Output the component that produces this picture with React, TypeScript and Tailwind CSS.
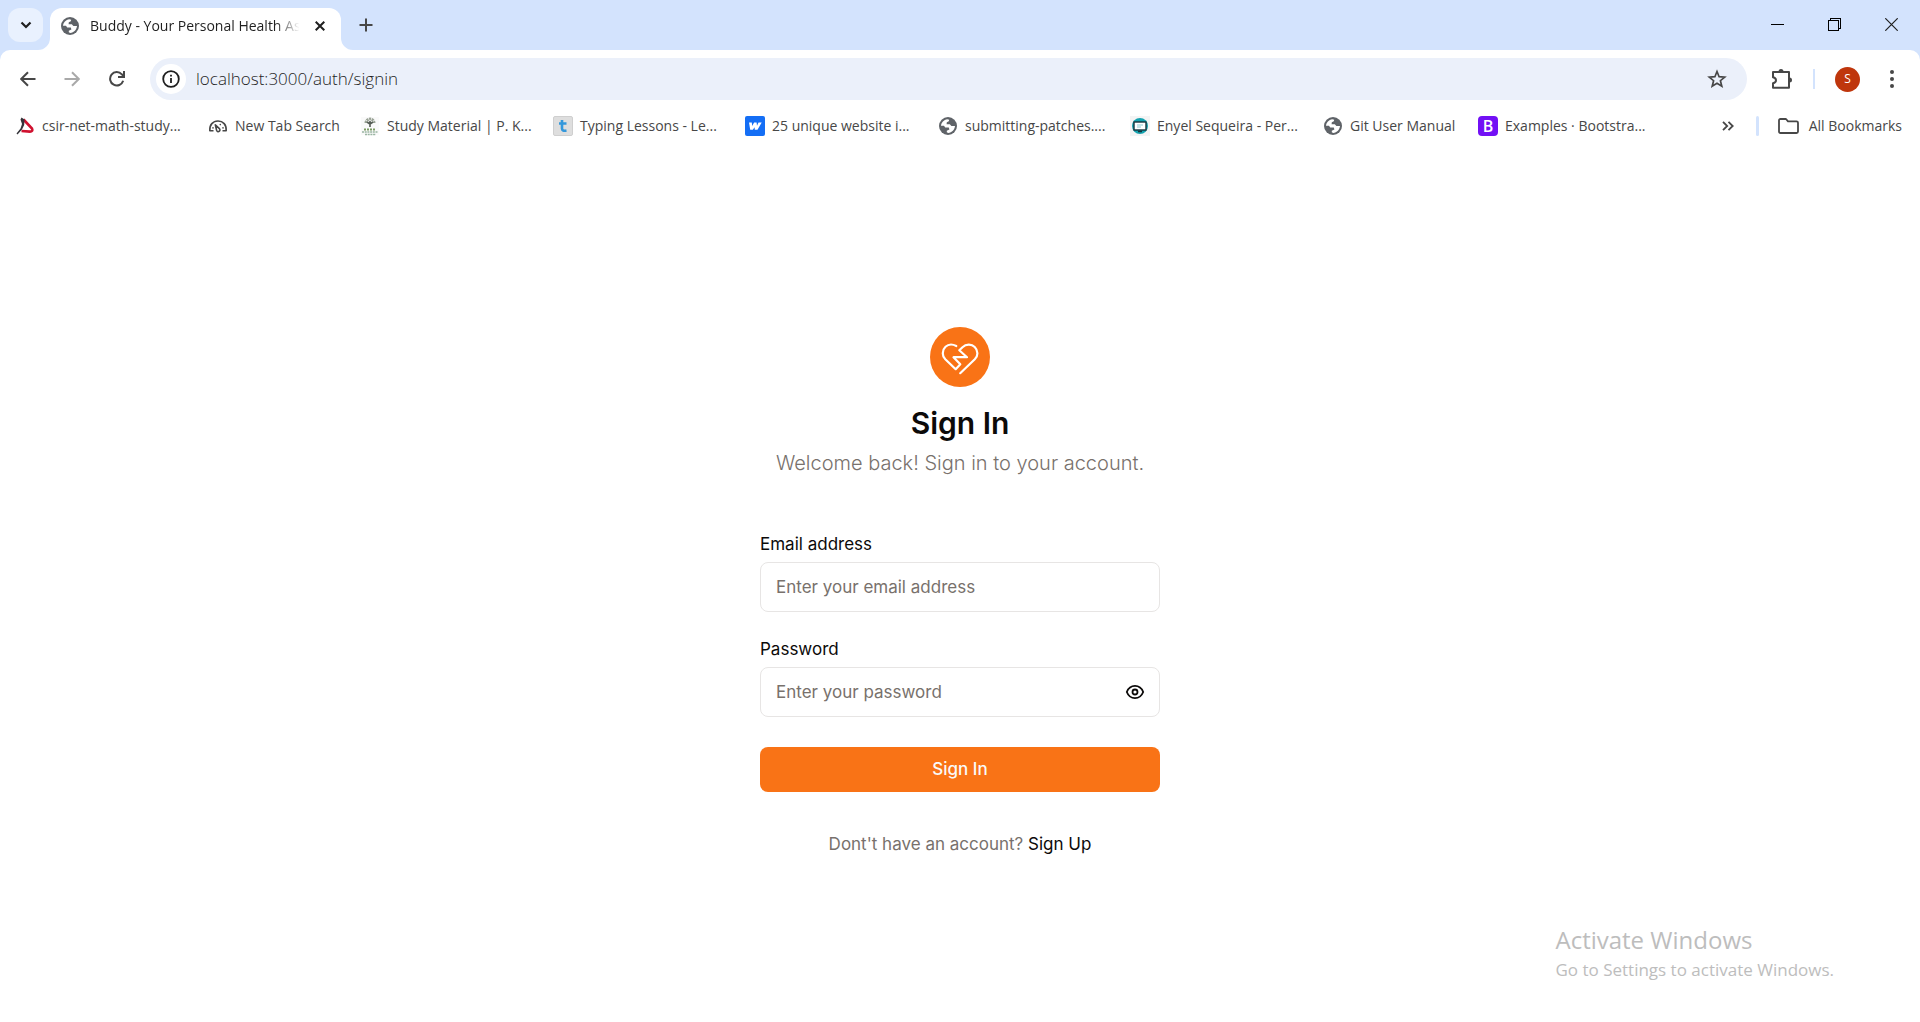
import React from "react";

const Globe = () => (
  <svg viewBox="0 0 18 18" className="size-[18px]" aria-hidden="true">
    <circle cx="9" cy="9" r="9" fill="#5f6368" />
    <path
      d="M2 8.800C2.200 5.500 5 2.600 8.200 2.200L10.200 2.800 9.800 4.200 7.800 5.200 7.600 7.200H10.800L12.400 9H16C15.700 12.600 13 15.600 9.200 15.900L7.800 15.300V13.800L10.400 12.600 9.800 10.600H6.200L5 8.800Z"
      fill="#fff"
    />
  </svg>
);

const MathIcon = () => (
  <svg viewBox="0 0 20 20" className="size-5" aria-hidden="true">
    <path d="M8.500 3.500L17 12.500C18 14.500 17 15.600 15 15.600L6.500 15" stroke="#d0112f" strokeWidth="2.600" fill="none" />
    <path d="M6.500 1.500L9.500 3.500 9.200 9 7 13.500 2.500 18.500 1.500 17.500 5.500 12.500 7 8 5.500 3.500Z" fill="#35343a" />
  </svg>
);

const GaugeIcon = () => (
  <svg viewBox="0 0 20 20" className="size-5" fill="none" stroke="#474747" strokeWidth="1.600" strokeLinejoin="round" aria-hidden="true">
    <path d="M5.500 14.800H1.800C1.300 8.800 5 5 10 5S18.700 8.800 18.200 14.800H14.500" />
    <path d="M7.300 8.800L8.600 14.400a1.700 1.700 0 1 0 2.800-1.700z" />
    <path d="M5 11.800v.1M15 11.800v.1M12.300 8.500v.1" strokeLinecap="round" />
  </svg>
);

const TreeIcon = () => (
  <svg viewBox="0 0 20 20" className="size-5" aria-hidden="true">
    <rect x="1" y="1" width="18" height="18" fill="#fafafa" />
    <path d="M6 7a4 4 0 0 1 8 0" stroke="#9aa396" strokeWidth="3" fill="none" strokeDasharray="2 .6" />
    <path d="M10 5v6M10 8l-3-2M10 8l3-2" stroke="#555d55" strokeWidth="1.600" />
    <path d="M4 13.500h12" stroke="#7a9a62" strokeWidth="2" strokeDasharray="2 1" />
    <path d="M2 16h16M5 18.500h11" stroke="#9ab5a2" strokeWidth="1.300" strokeDasharray="2 .7" />
  </svg>
);

const TypingIcon = () => (
  <span className="flex size-5 items-center justify-center rounded-xs border border-[#cfcfcf] bg-[#dedede]">
    <svg viewBox="0 0 10 14" className="h-3.5 w-2.5" fill="none" stroke="#3498db" strokeWidth="2.600" aria-hidden="true">
      <path d="M4 1v8.500c0 2 1.500 2.600 4.500 2M1 4.500h7.500" />
    </svg>
  </span>
);

const WebflowIcon = () => (
  <svg viewBox="0 0 20 20" className="size-5" aria-hidden="true">
    <rect width="20" height="20" rx="2" fill="#146ef5" />
    <path d="M4 6.500h2.800l.4 3.400 1.900-3.400h2.500l.4 3.200 1.500-3.200h3.200l-4.200 7.300H9.800l-.2-2.500-1.800 2.500H5.200z" fill="#fff" />
  </svg>
);

const ScreenIcon = () => (
  <svg viewBox="0 0 20 20" className="size-5" aria-hidden="true">
    <rect width="20" height="20" fill="#f4f4f4" />
    <circle cx="10" cy="10" r="8" fill="#14a3b0" />
    <rect x="4" y="6" width="12" height="8" fill="#fff" stroke="#17323b" strokeWidth="1.400" />
    <path d="M7 9h6M7 11h4" stroke="#8ccbd3" />
    <path d="M8 15.500h4" stroke="#17323b" strokeWidth="1.500" />
  </svg>
);

const BootstrapIcon = () => (
  <span className="flex size-5 items-center justify-center rounded-sm bg-[#7210f5] text-base leading-5 font-semibold text-white">
    B
  </span>
);

const bookmarks = [
  { label: "csir-net-math-study...", icon: <MathIcon />, width: "w-[193px]" },
  { label: "New Tab Search", icon: <GaugeIcon />, width: "w-[152px]" },
  { label: "Study Material | P. K...", icon: <TreeIcon />, width: "w-[193px]" },
  { label: "Typing Lessons - Le...", icon: <TypingIcon />, width: "w-[192px]" },
  { label: "25 unique website i...", icon: <WebflowIcon />, width: "w-[193px]" },
  { label: "submitting-patches....", icon: <Globe />, width: "w-[192px]" },
  { label: "Enyel Sequeira - Per...", icon: <ScreenIcon />, width: "w-[193px]" },
  { label: "Git User Manual", icon: <Globe />, width: "w-[155px]" },
  { label: "Examples · Bootstra...", icon: <BootstrapIcon />, width: "w-[193px]" },
];

function TabStrip() {
  return (
    <div className="flex h-[50px] items-start bg-[#d3e3fd] pl-2">
      <button aria-label="Search tabs" className="mt-2 flex h-[34px] w-[35px] items-center justify-center rounded-xl bg-[#e9f1fe]">
        <svg viewBox="0 0 12 8" className="h-2 w-3" fill="none" stroke="#1f1f1f" strokeWidth="2.200" aria-hidden="true">
          <path d="M1.500 1.500L6 6l4.500-4.500" />
        </svg>
      </button>
      <div className="relative mt-2 ml-[7px] flex h-[42px] w-[291px] items-center rounded-t-xl bg-white pb-1.5 pl-[11px]">
        <svg viewBox="0 0 12 12" className="absolute bottom-0 -left-3 size-3" aria-hidden="true">
          <path d="M12 0v12H0A12 12 0 0 0 12 0z" fill="#fff" />
        </svg>
        <svg viewBox="0 0 12 12" className="absolute -right-3 bottom-0 size-3" aria-hidden="true">
          <path d="M0 0v12h12A12 12 0 0 1 0 0z" fill="#fff" />
        </svg>
        <Globe />
        <span className="ml-[11px] w-[216px] mask-r-from-86% mask-r-to-97% text-sm whitespace-nowrap text-[#1f1f1f]">
          Buddy - Your Personal Health As
        </span>
        <button aria-label="Close tab" className="ml-1 flex size-5 items-center justify-center">
          <svg viewBox="0 0 10 10" className="size-2.5" stroke="#1f1f1f" strokeWidth="2" aria-hidden="true">
            <path d="M.7.7l8.600 8.600M9.300.7L.7 9.300" />
          </svg>
        </button>
      </div>
      <button aria-label="New tab" className="mt-[15px] ml-[15px] flex size-5 items-center justify-center">
        <svg viewBox="0 0 14 14" className="size-3.5" stroke="#474747" strokeWidth="2" aria-hidden="true">
          <path d="M7 .5v13M.5 7h13" />
        </svg>
      </button>
      <div className="ml-auto flex">
        <button aria-label="Minimize" className="flex h-[49px] w-[57px] items-center justify-center">
          <span className="h-px w-[13px] bg-black" />
        </button>
        <button aria-label="Restore" className="flex h-[49px] w-[57px] items-center justify-center">
          <svg viewBox="0 0 13 13" className="size-[13px]" fill="none" stroke="#000" shapeRendering="crispEdges" aria-hidden="true">
            <path d="M.5 2.500h10v10H.5zM2.500 2.500v-2h10v10h-2" />
          </svg>
        </button>
        <button aria-label="Close window" className="flex h-[49px] w-[57px] items-center justify-center">
          <svg viewBox="0 0 13 13" className="size-[13px]" stroke="#1f1f1f" strokeWidth="1.200" aria-hidden="true">
            <path d="M.3.3l12.400 12.400M12.700.3L.3 12.700" />
          </svg>
        </button>
      </div>
    </div>
  );
}

function Toolbar() {
  return (
    <div className="bg-[#d3e3fd]">
      <div className="flex items-center rounded-t-[10px] bg-white px-[18px] pt-2">
        <button aria-label="Back" className="flex size-5 items-center justify-center">
          <svg viewBox="0 0 16 16" className="size-4" fill="none" stroke="#474747" strokeWidth="2" aria-hidden="true">
            <path d="M15.500 8H1.500M8 1.200L1.200 8 8 14.800" />
          </svg>
        </button>
        <button aria-label="Forward" disabled className="ml-6 flex size-5 items-center justify-center">
          <svg viewBox="0 0 16 16" className="size-4" fill="none" stroke="#a9a9a9" strokeWidth="2" aria-hidden="true">
            <path d="M.5 8h14M8 1.200L14.800 8 8 14.800" />
          </svg>
        </button>
        <button aria-label="Reload" className="ml-[25px] flex size-5 items-center justify-center">
          <svg viewBox="0 0 16 16" className="size-4" fill="none" stroke="#474747" strokeWidth="2" aria-hidden="true">
            <path d="M14.200 9.800A6.700 6.700 0 1 1 12.800 3.300L14.500 5" />
            <path d="M15 0v6H9" />
          </svg>
        </button>
        <div className="ml-[23px] flex h-[42px] flex-1 items-center rounded-full bg-[#ebf0fa] pr-5 pl-1.5">
          <button aria-label="View site information" className="flex size-[30px] items-center justify-center rounded-full bg-white">
            <svg viewBox="0 0 18 18" className="size-[18px]" fill="none" stroke="#1f1f1f" strokeWidth="1.800" aria-hidden="true">
              <circle cx="9" cy="9" r="7.800" />
              <path d="M9 8v5M9 4.800v1.800" />
            </svg>
          </button>
          <input
            aria-label="Address"
            defaultValue="localhost:3000/auth/signin"
            className="ml-2.5 min-w-0 flex-1 bg-transparent text-[17px] leading-6 font-light text-[#1f1f1f] outline-none"
          />
          <button aria-label="Bookmark this tab" className="flex size-5 items-center justify-center">
            <svg viewBox="0 0 20 20" className="size-5" fill="none" stroke="#474747" strokeWidth="1.700" aria-hidden="true">
              <path d="M10 2.500l2.100 5.200 5.600.4-4.300 3.600 1.400 5.500-4.800-3-4.800 3 1.400-5.500L2.300 8.100l5.600-.4z" />
            </svg>
          </button>
        </div>
        <button aria-label="Extensions" className="ml-6 flex size-[21px] items-center justify-center">
          <svg viewBox="0 0 21 21" className="size-[21px]" aria-hidden="true">
            <path
              d="M2 3h16v15.800H2v-4.500c1.900-.4 3-1.400 3-3s-1.100-2.600-3-3z"
              fill="none" stroke="#474747" strokeWidth="2" strokeLinejoin="round"
            />
            <path d="M7.500 2.500a2.500 2.500 0 0 1 5 0zM18.500 8.500a2.500 2.500 0 0 1 0 5z" fill="#474747" />
          </svg>
        </button>
        <span className="ml-[21px] h-5 w-0.5 bg-[#d3e3fd]" />
        <button aria-label="Profile" className="ml-5 flex size-[25px] items-center justify-center rounded-full bg-[#bf360c] text-xs text-white">
          S
        </button>
        <button aria-label="Menu" className="ml-[22px] flex size-5 items-center justify-center">
          <svg viewBox="0 0 4 18" className="h-[18px] w-1" fill="#474747" aria-hidden="true">
            <circle cx="2" cy="2" r="2" />
            <circle cx="2" cy="9" r="2" />
            <circle cx="2" cy="16" r="2" />
          </svg>
        </button>
      </div>
    </div>
  );
}

function BookmarksBar() {
  return (
    <nav aria-label="Bookmarks" className="flex h-[52px] items-center pr-[18px] pl-[15px] text-sm whitespace-nowrap text-[#474747]">
      {bookmarks.map((b) => (
        <a key={b.label} href="#" className={`flex items-center gap-[7px] ${b.width}`}>
          <span className="flex w-5 justify-center">{b.icon}</span>
          {b.label}
        </a>
      ))}
      <button aria-label="More bookmarks" className="ml-auto flex size-5 items-center justify-center">
        <svg viewBox="0 0 12 10" className="h-2.5 w-3" fill="none" stroke="#474747" strokeWidth="1.800" aria-hidden="true">
          <path d="M1 .8L5.200 5 1 9.200M6.500.8L10.700 5 6.500 9.200" />
        </svg>
      </button>
      <span className="ml-[18px] h-5 w-[3px] rounded bg-[#d3e3fd]" />
      <button className="ml-[19px] flex items-center gap-2.5">
        <svg viewBox="0 0 21 16" className="h-4 w-[21px]" fill="none" stroke="#474747" strokeWidth="1.800" strokeLinejoin="round" aria-hidden="true">
          <path d="M1 2.500C1 1.500 1.500 1 2.500 1H8l2 2.300h8.500c1 0 1.500.5 1.500 1.500v8.700c0 1-.5 1.500-1.500 1.500h-16C1.500 15 1 14.500 1 13.500z" />
        </svg>
        All Bookmarks
      </button>
    </nav>
  );
}

function SignInForm() {
  const [visible, setVisible] = React.useState(false);
  return (
    <main className="flex flex-1 flex-col items-center justify-center pt-2 font-['Inter',sans-serif] text-[#0c0a09]">
      <div className="flex w-[400px] flex-col">
        <div className="flex flex-col items-center">
          <svg viewBox="0 0 60 60" className="size-[60px]" role="img" aria-label="Buddy">
            <circle cx="30" cy="30" r="30" fill="#f97316" />
            <path
              d="M26.300 19C22.500 17 18.500 17 15.500 19.800C11.800 23.300 12 29 15.300 32.300L25.700 42.200L30.300 37.300L23.500 30.200H37L29.300 23.300L32.500 20.200C36 17 41.500 16.800 44.700 20C48.300 23.600 48.300 28.800 44.800 32.200L30.200 46.200"
              fill="none" stroke="#fff" strokeWidth="2.200" strokeLinecap="round" strokeLinejoin="round"
            />
          </svg>
          <h1 className="mt-[18px] text-3xl leading-9 font-semibold">Sign In</h1>
          <p className="mt-2 text-xl leading-7 font-light whitespace-nowrap text-[#78716c]">Welcome back! Sign in to your account.</p>
        </div>
        <form className="mt-[55px] flex flex-col text-[17px] leading-6" onSubmit={(e) => e.preventDefault()}>
          <label htmlFor="email">Email address</label>
          <input
            id="email"
            type="email"
            placeholder="Enter your email address"
            className="mt-1.5 h-[50px] rounded-lg border border-[#e7e5e4] px-[15px] outline-none placeholder:text-[#78716c]"
          />
          <label htmlFor="password" className="mt-[25px]">Password</label>
          <div className="mt-1.5 flex h-[50px] items-center rounded-lg border border-[#e7e5e4] pr-[14px] pl-[15px]">
            <input
              id="password"
              type={visible ? "text" : "password"}
              placeholder="Enter your password"
              className="min-w-0 flex-1 outline-none placeholder:text-[#78716c]"
            />
            <button type="button" aria-label="Show password" onClick={() => setVisible(!visible)}>
              <svg viewBox="0 0 20 20" className="size-5" fill="none" stroke="#0c0a09" strokeWidth="1.800" aria-hidden="true">
                <path d="M1.800 10C5 1.900 15 1.900 18.200 10C15 18.100 5 18.100 1.800 10z" />
                <circle cx="10" cy="10" r="2.500" />
              </svg>
            </button>
          </div>
          <button type="submit" className="mt-[30px] h-[45px] rounded-lg bg-[#f97316] font-medium text-[#fafaf9]">
            Sign In
          </button>
        </form>
        <p className="mt-10 text-center text-[17px] leading-6 text-[#78716c]">
          Dont't have an account?{" "}
          <a href="#" className="text-[#0c0a09]">Sign Up</a>
        </p>
      </div>
    </main>
  );
}

export default function App() {
  return (
    <div className="relative flex min-h-screen flex-col bg-white font-['Open_Sans','Noto_Sans',sans-serif]">
      <header>
        <TabStrip />
        <Toolbar />
        <BookmarksBar />
      </header>
      <SignInForm />
      <aside className="absolute right-[86px] bottom-[38px] text-[#bdbdbd]">
        <p className="text-2xl leading-8">Activate Windows</p>
        <p className="text-[17px] leading-7">Go to Settings to activate Windows.</p>
      </aside>
    </div>
  );
}
